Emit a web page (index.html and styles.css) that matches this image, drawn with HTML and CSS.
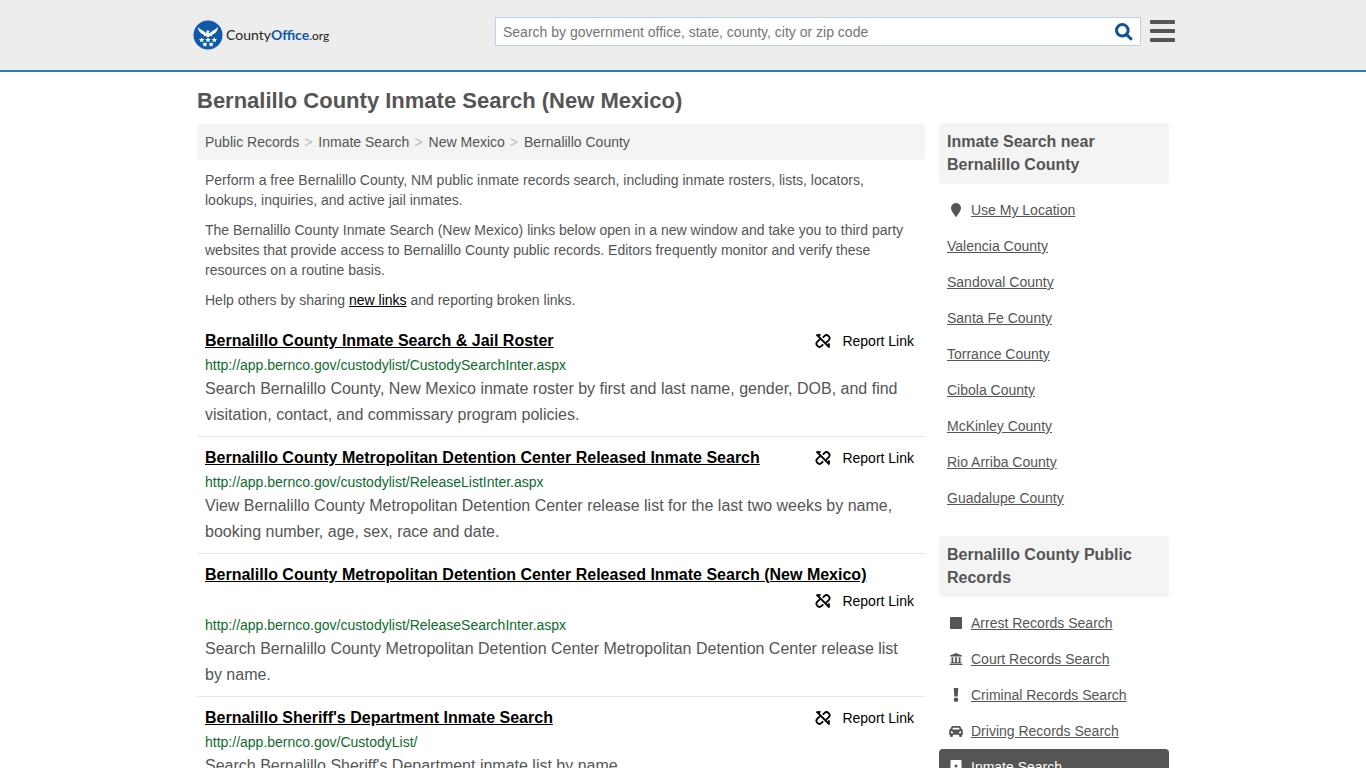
FILE: index.html
```html
<!DOCTYPE html>
<html lang="en">
<head>
  <meta charset="UTF-8">
  <meta name="viewport" content="width=device-width, initial-scale=1.0">
  <title>Bernalillo County Inmate Search (New Mexico)</title>
  <link rel="stylesheet" href="styles.css">
</head>
<body>
  <!-- Shared icons -->
  <svg class="sprite" aria-hidden="true">
    <symbol id="unlink" viewBox="0 0 16 16">
      <g fill="none" stroke="currentColor" stroke-width="1.8">
        <path d="M1.500 1.500l13 13"/>
        <path d="M7.800 4.700l1.600-1.600a2.900 2.900 0 0 1 4.200 4.200l-2.700 2.600"/>
        <path d="M8.200 11.300l-1.600 1.600a2.900 2.900 0 0 1-4.200-4.200l2.700-2.600"/>
        <path d="M5.500 2.200a3 3 0 0 0-3 .6M13.500 10.300a3 3 0 0 1 .3 3"/>
      </g>
    </symbol>
  </svg>

  <header class="header">
    <div class="header-inner">
      <a class="logo" href="#">
        <svg class="logo-mark" viewBox="0 0 30 30" aria-hidden="true">
          <circle cx="15" cy="15" r="14.500" fill="#0f59a8"/>
          <g fill="#fff">
            <path d="M5 7c1.800 2.400 4.600 3.200 6.800 5l1.300 1.300.6-2.300c.4-.9 1.800-1 2.400-.2l.3.900-.8.300.5 1.500 1.900-1.500c2.200-1.800 5-2.600 7-5-.2 4.200-2.600 6.700-6.600 8l1.400 1.300-2.700-.4-2.100 1.600-2.100-1.600-2.700.4 1.400-1.300C7.600 13.700 5.200 11.200 5 7z"/>
            <path id="star" d="M8.700 17.200l.8 1.700 1.900.2-1.400 1.300.4 1.900-1.700-1-1.700 1 .4-1.900L6 19.100l1.900-.2z"/>
            <use href="#star" x="6.300"/>
            <use href="#star" x="12.600"/>
            <use href="#star" x="3.150" y="4.500"/>
            <use href="#star" x="9.450" y="4.500"/>
          </g>
        </svg>
        <span class="logo-text">County<b>Office</b><small>.org</small></span>
      </a>
      <form class="search">
        <input class="search-input" type="text" aria-label="Search" placeholder="Search by government office, state, county, city or zip code">
        <button class="search-button" type="button" aria-label="Submit search">
          <svg viewBox="0 0 18 18" width="18" height="18" aria-hidden="true">
            <g fill="none" stroke="#0f519c" stroke-width="3">
              <circle cx="7.300" cy="7.300" r="5.800"/>
              <path d="M11.500 11.500l5.300 5.300"/>
            </g>
          </svg>
        </button>
      </form>
      <button class="menu-button" type="button" aria-label="Menu">
        <span></span><span></span><span></span>
      </button>
    </div>
  </header>

  <div class="page">
    <h1>Bernalillo County Inmate Search (New Mexico)</h1>
    <div class="columns">
      <main class="content">
        <nav class="breadcrumb" aria-label="Breadcrumb">
          <a href="#">Public Records</a><i>&gt;</i><a href="#">Inmate Search</a><i>&gt;</i><a href="#">New Mexico</a><i>&gt;</i><a href="#">Bernalillo County</a>
        </nav>
        <div class="intro">
          <p>Perform a free Bernalillo County, NM public inmate records search, including inmate rosters, lists, locators, lookups, inquiries, and active jail inmates.</p>
          <p>The Bernalillo County Inmate Search (New Mexico) links below open in a new window and take you to third party websites that provide access to Bernalillo County public records. Editors frequently monitor and verify these resources on a routine basis.</p>
          <p>Help others by sharing <a href="#">new links</a> and reporting broken links.</p>
        </div>

        <article class="result">
          <div class="result-head">
            <a class="result-title" href="#">Bernalillo County Inmate Search &amp; Jail Roster</a>
            <a class="report" href="#"><svg class="report-icon" aria-hidden="true"><use href="#unlink"/></svg>Report Link</a>
          </div>
          <div class="result-url">http://app.bernco.gov/custodylist/CustodySearchInter.aspx</div>
          <p class="result-text">Search Bernalillo County, New Mexico inmate roster by first and last name, gender, DOB, and find visitation, contact, and commissary program policies.</p>
        </article>

        <article class="result">
          <div class="result-head">
            <a class="result-title" href="#">Bernalillo County Metropolitan Detention Center Released Inmate Search</a>
            <a class="report" href="#"><svg class="report-icon" aria-hidden="true"><use href="#unlink"/></svg>Report Link</a>
          </div>
          <div class="result-url">http://app.bernco.gov/custodylist/ReleaseListInter.aspx</div>
          <p class="result-text">View Bernalillo County Metropolitan Detention Center release list for the last two weeks by name, booking number, age, sex, race and date.</p>
        </article>

        <article class="result">
          <div class="result-head">
            <a class="result-title" href="#">Bernalillo County Metropolitan Detention Center Released Inmate Search (New Mexico)</a>
            <a class="report" href="#"><svg class="report-icon" aria-hidden="true"><use href="#unlink"/></svg>Report Link</a>
          </div>
          <div class="result-url">http://app.bernco.gov/custodylist/ReleaseSearchInter.aspx</div>
          <p class="result-text">Search Bernalillo County Metropolitan Detention Center Metropolitan Detention Center release list by name.</p>
        </article>

        <article class="result">
          <div class="result-head">
            <a class="result-title" href="#">Bernalillo Sheriff's Department Inmate Search</a>
            <a class="report" href="#"><svg class="report-icon" aria-hidden="true"><use href="#unlink"/></svg>Report Link</a>
          </div>
          <div class="result-url">http://app.bernco.gov/CustodyList/</div>
          <p class="result-text">Search Bernalillo Sheriff's Department inmate list by name.</p>
        </article>
      </main>

      <aside class="sidebar">
        <section>
          <h2>Inmate Search near Bernalillo County</h2>
          <ul>
            <li>
              <svg class="icon" viewBox="0 0 18 14" aria-hidden="true"><path d="M9 0a5 5 0 0 1 5 5c0 2.800-2.500 5.500-4.400 8.500a.7.7 0 0 1-1.200 0C6.500 10.500 4 7.800 4 5a5 5 0 0 1 5-5z"/></svg>
              <a href="#">Use My Location</a>
            </li>
            <li><a href="#">Valencia County</a></li>
            <li><a href="#">Sandoval County</a></li>
            <li><a href="#">Santa Fe County</a></li>
            <li><a href="#">Torrance County</a></li>
            <li><a href="#">Cibola County</a></li>
            <li><a href="#">McKinley County</a></li>
            <li><a href="#">Rio Arriba County</a></li>
            <li><a href="#">Guadalupe County</a></li>
          </ul>
        </section>
        <section>
          <h2>Bernalillo County Public Records</h2>
          <ul>
            <li>
              <svg class="icon" viewBox="0 0 18 14" aria-hidden="true"><rect x="3" y="1" width="12" height="12" rx="1"/></svg>
              <a href="#">Arrest Records Search</a>
            </li>
            <li>
              <svg class="icon" viewBox="0 0 18 14" aria-hidden="true"><path d="M9 1l6 2.600v1H3v-1zM4.500 5.300h1.800v5H4.500zM8.100 5.300h1.800v5H8.100zM11.700 5.300h1.800v5h-1.800zM3.600 10.200h10.800v1H3.600zM2.600 11.700h12.800V13H2.600z"/></svg>
              <a href="#">Court Records Search</a>
            </li>
            <li>
              <svg class="icon" viewBox="0 0 18 14" aria-hidden="true"><path d="M6.700 0h4.600l-.6 8.500H7.300z"/><circle cx="9" cy="11.700" r="2.300"/></svg>
              <a href="#">Criminal Records Search</a>
            </li>
            <li>
              <svg class="icon" viewBox="0 0 18 14" aria-hidden="true"><path fill-rule="evenodd" d="M5.800 2h6.400c.7 0 1.200.4 1.500 1l.9 2.200h1.100v1h-.5c.4.400.6.800.6 1.300v3.200h-.8V12c0 .6-.3.900-.9.900H13c-.6 0-.9-.3-.9-.9v-1.300H5.900V12c0 .6-.3.900-.9.900H3.900c-.6 0-.9-.3-.9-.9v-1.300h-.8V7.500c0-.5.2-.9.600-1.300h-.5v-1h1.100L4.300 3c.3-.6.8-1 1.500-1zm.2 1.700l-.7 1.800h7.400L12 3.700zM4.700 7.200a1 1 0 1 0 0 2h1.500c0-1-.6-2-1.500-2zm8.600 0c-.9 0-1.500 1-1.500 2h1.500a1 1 0 1 0 0-2z"/></svg>
              <a href="#">Driving Records Search</a>
            </li>
            <li class="active">
              <svg class="icon" viewBox="0 0 18 14" aria-hidden="true"><path fill-rule="evenodd" d="M4.500 0h9c.6 0 1 .4 1 1v12c0 .6-.4 1-1 1h-9c-.6 0-1-.4-1-1V1c0-.6.4-1 1-1zM9 4.500a1.500 1.500 0 1 0 0 3 1.500 1.500 0 0 0 0-3zM6.300 11h5.400c0-1.500-1-2.500-2.700-2.500s-2.700 1-2.700 2.500z"/></svg>
              <a href="#">Inmate Search</a>
            </li>
          </ul>
        </section>
      </aside>
    </div>
  </div>
</body>
</html>
```
FILE: styles.css
```css
* {
  box-sizing: border-box;
}
body {
  margin: 0;
  background-color: #fff;
  color: #555;
  font-family: "Liberation Sans", Arial, sans-serif;
  font-size: 14px;
  line-height: 20px;
}
a {
  color: inherit;
}
p,
ul {
  margin: 0;
  padding: 0;
}
button {
  padding: 0;
  border: 0;
  background: none;
  cursor: pointer;
}
.sprite {
  display: none;
}

/* Header */
.header {
  background-color: #ededed;
  border-bottom: 2px solid #337ab7;
}
.header-inner {
  display: flex;
  align-items: flex-start;
  max-width: 984px;
  margin: 0 auto;
  padding: 17px 0 17px 2px;
}
.logo {
  display: flex;
  align-items: center;
  height: 36px;
  gap: 3px;
  color: #222;
  text-decoration: none;
}
.logo-mark {
  width: 30px;
  height: 30px;
}
.logo-text {
  font-family: Lato, sans-serif;
  font-size: 14px;
}
.logo-text b {
  color: #0f59a8;
}
.logo-text small {
  font-size: 12px;
}
.search {
  display: flex;
  flex: 0 1 646px;
  height: 29px;
  margin-left: auto;
  background-color: #fff;
  border: 1px solid #bcd3e6;
}
.search-input {
  flex: 1;
  min-width: 0;
  padding: 0 7px;
  border: 0;
  background: none;
  color: #555;
  font-family: inherit;
  font-size: 14px;
}
.search-input::placeholder {
  color: #757575;
}
.search-button {
  display: flex;
  align-items: center;
  padding: 1px 7px 0;
}
.menu-button {
  display: flex;
  flex-direction: column;
  gap: 5px;
  width: 25px;
  margin: 3px 0 0 9px;
}
.menu-button span {
  width: 100%;
  height: 4px;
  border-radius: 1px;
  background-color: #555;
}

/* Page */
.page {
  max-width: 972px;
  margin: 0 auto;
}
h1 {
  margin: 0;
  padding: 16px 0 10px;
  font-size: 22px;
  line-height: 25px;
}
.columns {
  display: flex;
  align-items: flex-start;
  gap: 14px;
}
.content {
  flex: 1;
  min-width: 0;
}
.breadcrumb {
  margin-top: 1px;
  padding: 8px;
  border-radius: 4px;
  background-color: #f4f4f4;
}
.breadcrumb a {
  text-decoration: none;
}
.breadcrumb i {
  padding: 0 6px 0 5px;
  color: #bbb;
  font-style: normal;
}
.intro {
  padding: 0 8px;
}
.intro p {
  margin: 10px 0;
}
.intro a {
  color: #000;
}

/* Results */
.result {
  padding: 8px;
  border-bottom: 1px solid #e8e8e8;
}
.result-head {
  display: flex;
  flex-wrap: wrap;
  margin-bottom: 1px;
  color: #000;
  line-height: 26px;
}
.result-title {
  font-size: 16px;
  font-weight: bold;
}
.report {
  display: flex;
  align-items: center;
  gap: 11px;
  margin-left: auto;
  padding-right: 3px;
  text-decoration: none;
}
.report-icon {
  width: 16px;
  height: 16px;
}
.result-url {
  margin-bottom: 1px;
  color: #0e6b2e;
}
.result-text {
  font-size: 16px;
  line-height: 26px;
}

/* Sidebar */
.sidebar {
  flex: 0 0 230px;
}
.sidebar section {
  margin-bottom: 20px;
}
.sidebar h2 {
  margin: 0 0 8px;
  padding: 7px 8px 8px;
  border-radius: 4px;
  background-color: #f4f4f4;
  font-size: 16px;
  line-height: 23px;
}
.sidebar li {
  display: flex;
  align-items: center;
  gap: 6px;
  padding: 8px;
  list-style: none;
}
.sidebar .active {
  border-radius: 4px;
  background-color: #555;
  color: #fff;
}
.active a {
  text-decoration: none;
}
.icon {
  width: 18px;
  height: 14px;
  fill: currentColor;
}
```
